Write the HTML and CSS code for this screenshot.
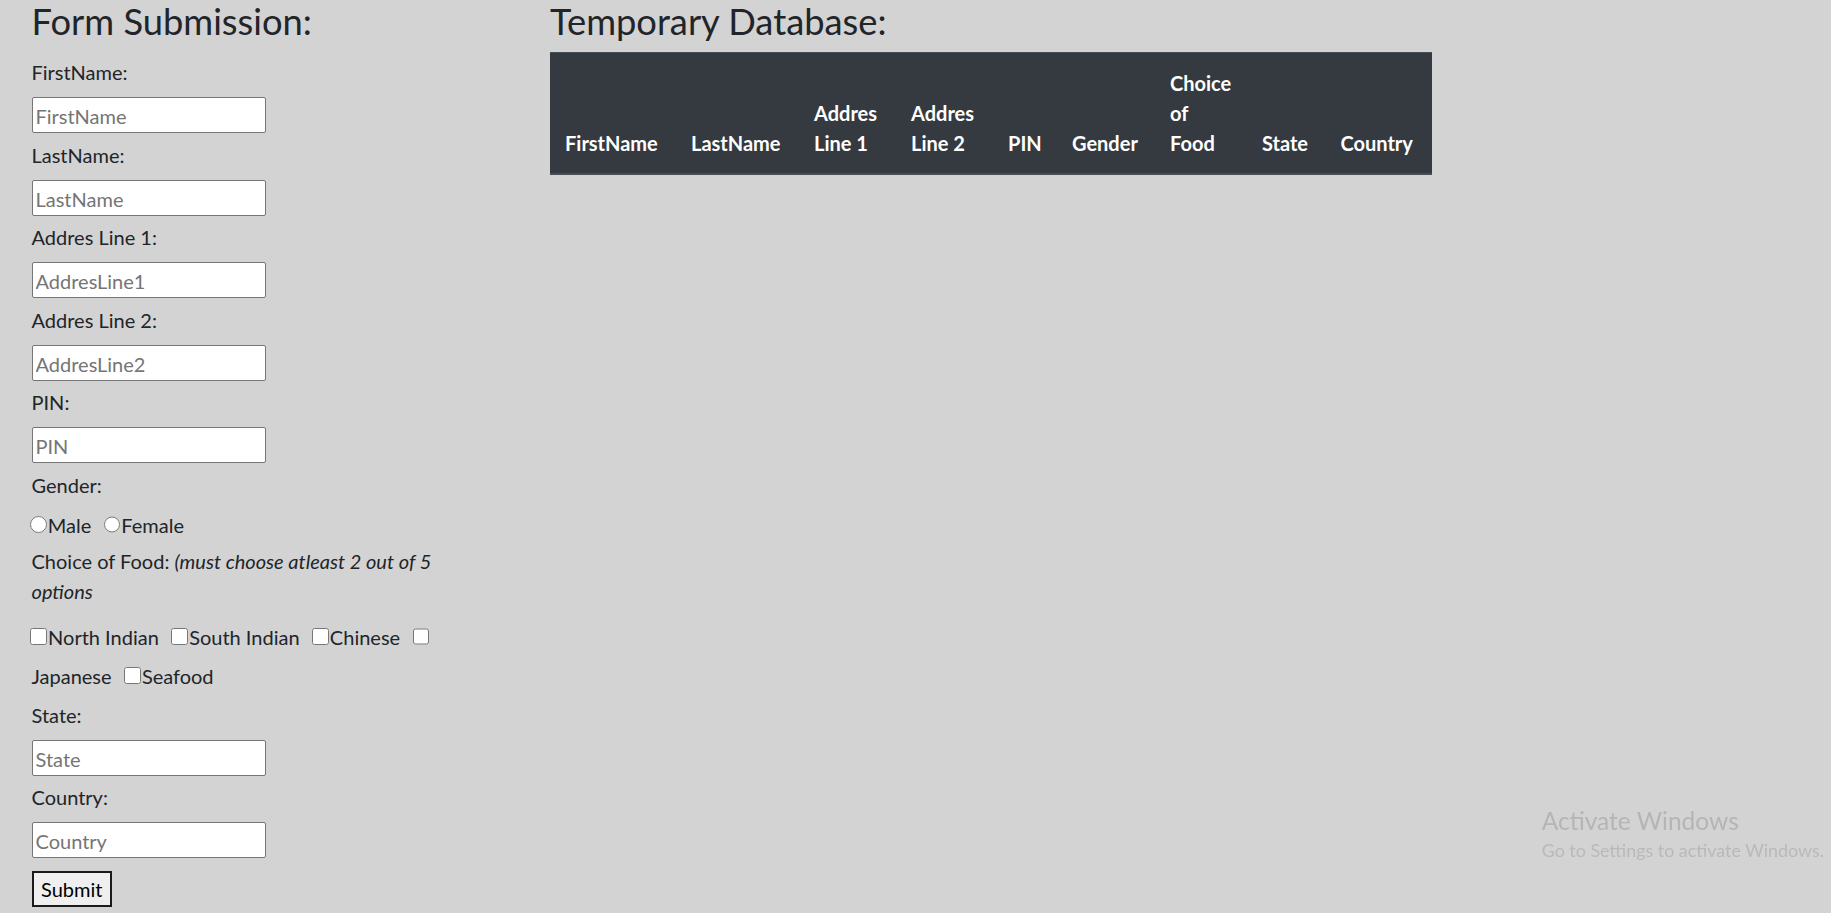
FILE: index.html
```html
<!DOCTYPE html>
<html lang="en">
<head>
<meta charset="utf-8">
<title>Form Submission</title>
<link rel="stylesheet" href="styles.css">
</head>
<body>
<main class="page">
  <section class="form-col">
    <h3 class="title">Form Submission:</h3>
    <form class="form">
      <label class="field-label" for="fn">FirstName:</label>
      <input class="text-input" id="fn" type="text" placeholder="FirstName">
      <label class="field-label" for="ln">LastName:</label>
      <input class="text-input" id="ln" type="text" placeholder="LastName">
      <label class="field-label" for="a1">Addres Line 1:</label>
      <input class="text-input" id="a1" type="text" placeholder="AddresLine1">
      <label class="field-label" for="a2">Addres Line 2:</label>
      <input class="text-input" id="a2" type="text" placeholder="AddresLine2">
      <label class="field-label" for="pin">PIN:</label>
      <input class="text-input" id="pin" type="text" placeholder="PIN">
      <div class="field-label">Gender:</div>
      <div class="radio-row"><input class="radio" type="radio" name="gender" id="male"><label class="opt" for="male">Male</label><input class="radio" type="radio" name="gender" id="female"><label class="opt" for="female">Female</label></div>
      <div class="field-label choice">Choice of Food: <em class="hint">(must choose atleast 2 out of 5</em> <em class="hint">options</em></div>
      <div class="check-row"><input class="check" type="checkbox" id="ni"><label class="opt" for="ni">North Indian</label><input class="check" type="checkbox" id="si"><label class="opt" for="si">South Indian</label><input class="check" type="checkbox" id="ch"><label class="opt" for="ch">Chinese</label><input class="check" type="checkbox" id="jp"></div>
      <div class="check-row"><label class="opt" for="jp">Japanese</label><input class="check" type="checkbox" id="sf"><label class="opt" for="sf">Seafood</label></div>
      <label class="field-label" for="st">State:</label>
      <input class="text-input" id="st" type="text" placeholder="State">
      <label class="field-label" for="co">Country:</label>
      <input class="text-input" id="co" type="text" placeholder="Country">
      <button class="submit" type="button">Submit</button>
    </form>
  </section>
  <section class="db-col">
    <h3 class="title">Temporary Database:</h3>
    <table class="db-table">
      <thead>
        <tr>
          <th>FirstName</th>
          <th>LastName</th>
          <th>Addres Line 1</th>
          <th>Addres Line 2</th>
          <th>PIN</th>
          <th>Gender</th>
          <th>Choice of Food</th>
          <th>State</th>
          <th>Country</th>
        </tr>
      </thead>
      <tbody></tbody>
    </table>
  </section>
</main>
<div class="watermark">
  <div class="wm-title">Activate Windows</div>
  <div class="wm-sub">Go to Settings to activate Windows.</div>
</div>
</body>
</html>
```

FILE: styles.css
```css
* { box-sizing: border-box; }

html, body {
  margin: 0;
  padding: 0;
}

body {
  background: #d3d3d3;
  color: #212529;
  font-family: Lato, "Open Sans", sans-serif;
  font-size: 20px;
  line-height: 30px;
  height: 913px;
  overflow: hidden;
}

.page {
  display: grid;
  grid-template-columns: 440px 882px;
  column-gap: 78.5px;
  padding-left: 31.5px;
  align-items: start;
}

.title {
  margin: 0 0 10px;
  font-size: 36.3px;
  line-height: 42px;
  font-weight: 400;
}

.form {
  display: flex;
  flex-direction: column;
  align-items: flex-start;
  padding-top: 5.4px;
}

.field-label {
  display: block;
  margin-bottom: 10px;
}

.choice {
  margin-bottom: 16px;
}

.text-input {
  display: block;
  width: 234.4px;
  height: 36px;
  margin: 0 0 6.5px;
  padding: 2px 3px 0;
  border: 1px solid #767676;
  border-radius: 2px;
  background: #fff;
  font-family: inherit;
  font-size: 20px;
  color: #212529;
}

.text-input::placeholder {
  color: #757575;
}

.radio-row {
  height: 30px;
  margin-bottom: 6px;
  white-space: nowrap;
}

.radio {
  width: 16.5px;
  height: 16.5px;
  margin: 0 1px 0.8px -1.2px;
  vertical-align: baseline;
}

.check-row {
  height: 30px;
  margin-bottom: 9px;
  white-space: nowrap;
}

.check {
  width: 16.8px;
  height: 16.8px;
  margin: 0 1.05px -1.25px -1.25px;
  vertical-align: baseline;
}

.opt {
  margin-right: 13.7px;
}

.submit {
  margin-top: 6.5px;
  width: 80.4px;
  height: 35.4px;
  padding: 0 7px;
  border: 2px solid #1b1b1b;
  border-radius: 0;
  background: #efefef;
  color: #000;
  font-family: inherit;
  font-size: 20px;
  line-height: 30px;
}

.db-table {
  width: 882px;
  table-layout: fixed;
  border-collapse: collapse;
  color: #fff;
}

.db-table th {
  background: #343a40;
  border-top: 1.25px solid #454d55;
  border-bottom: 2.5px solid #454d55;
  padding: 15px;
  text-align: left;
  vertical-align: bottom;
  font-weight: 700;
  line-height: 30px;
}

.db-table th:nth-child(1) { width: 126px; }
.db-table th:nth-child(2) { width: 123px; }
.db-table th:nth-child(3) { width: 97px; }
.db-table th:nth-child(4) { width: 97px; }
.db-table th:nth-child(5) { width: 64px; }
.db-table th:nth-child(6) { width: 98px; }
.db-table th:nth-child(7) { width: 92px; }
.db-table th:nth-child(8) { width: 78.5px; }
.db-table th:nth-child(9) { width: 106.5px; }

.watermark {
  position: fixed;
  left: 1541.7px;
  top: 806px;
  color: #b5b5b5;
  pointer-events: none;
}

.wm-title {
  font-size: 24.5px;
  line-height: 30px;
}

.wm-sub {
  margin-top: 1px;
  font-size: 17.9px;
  line-height: 27px;
  color: #b9b9b9;
}
```
